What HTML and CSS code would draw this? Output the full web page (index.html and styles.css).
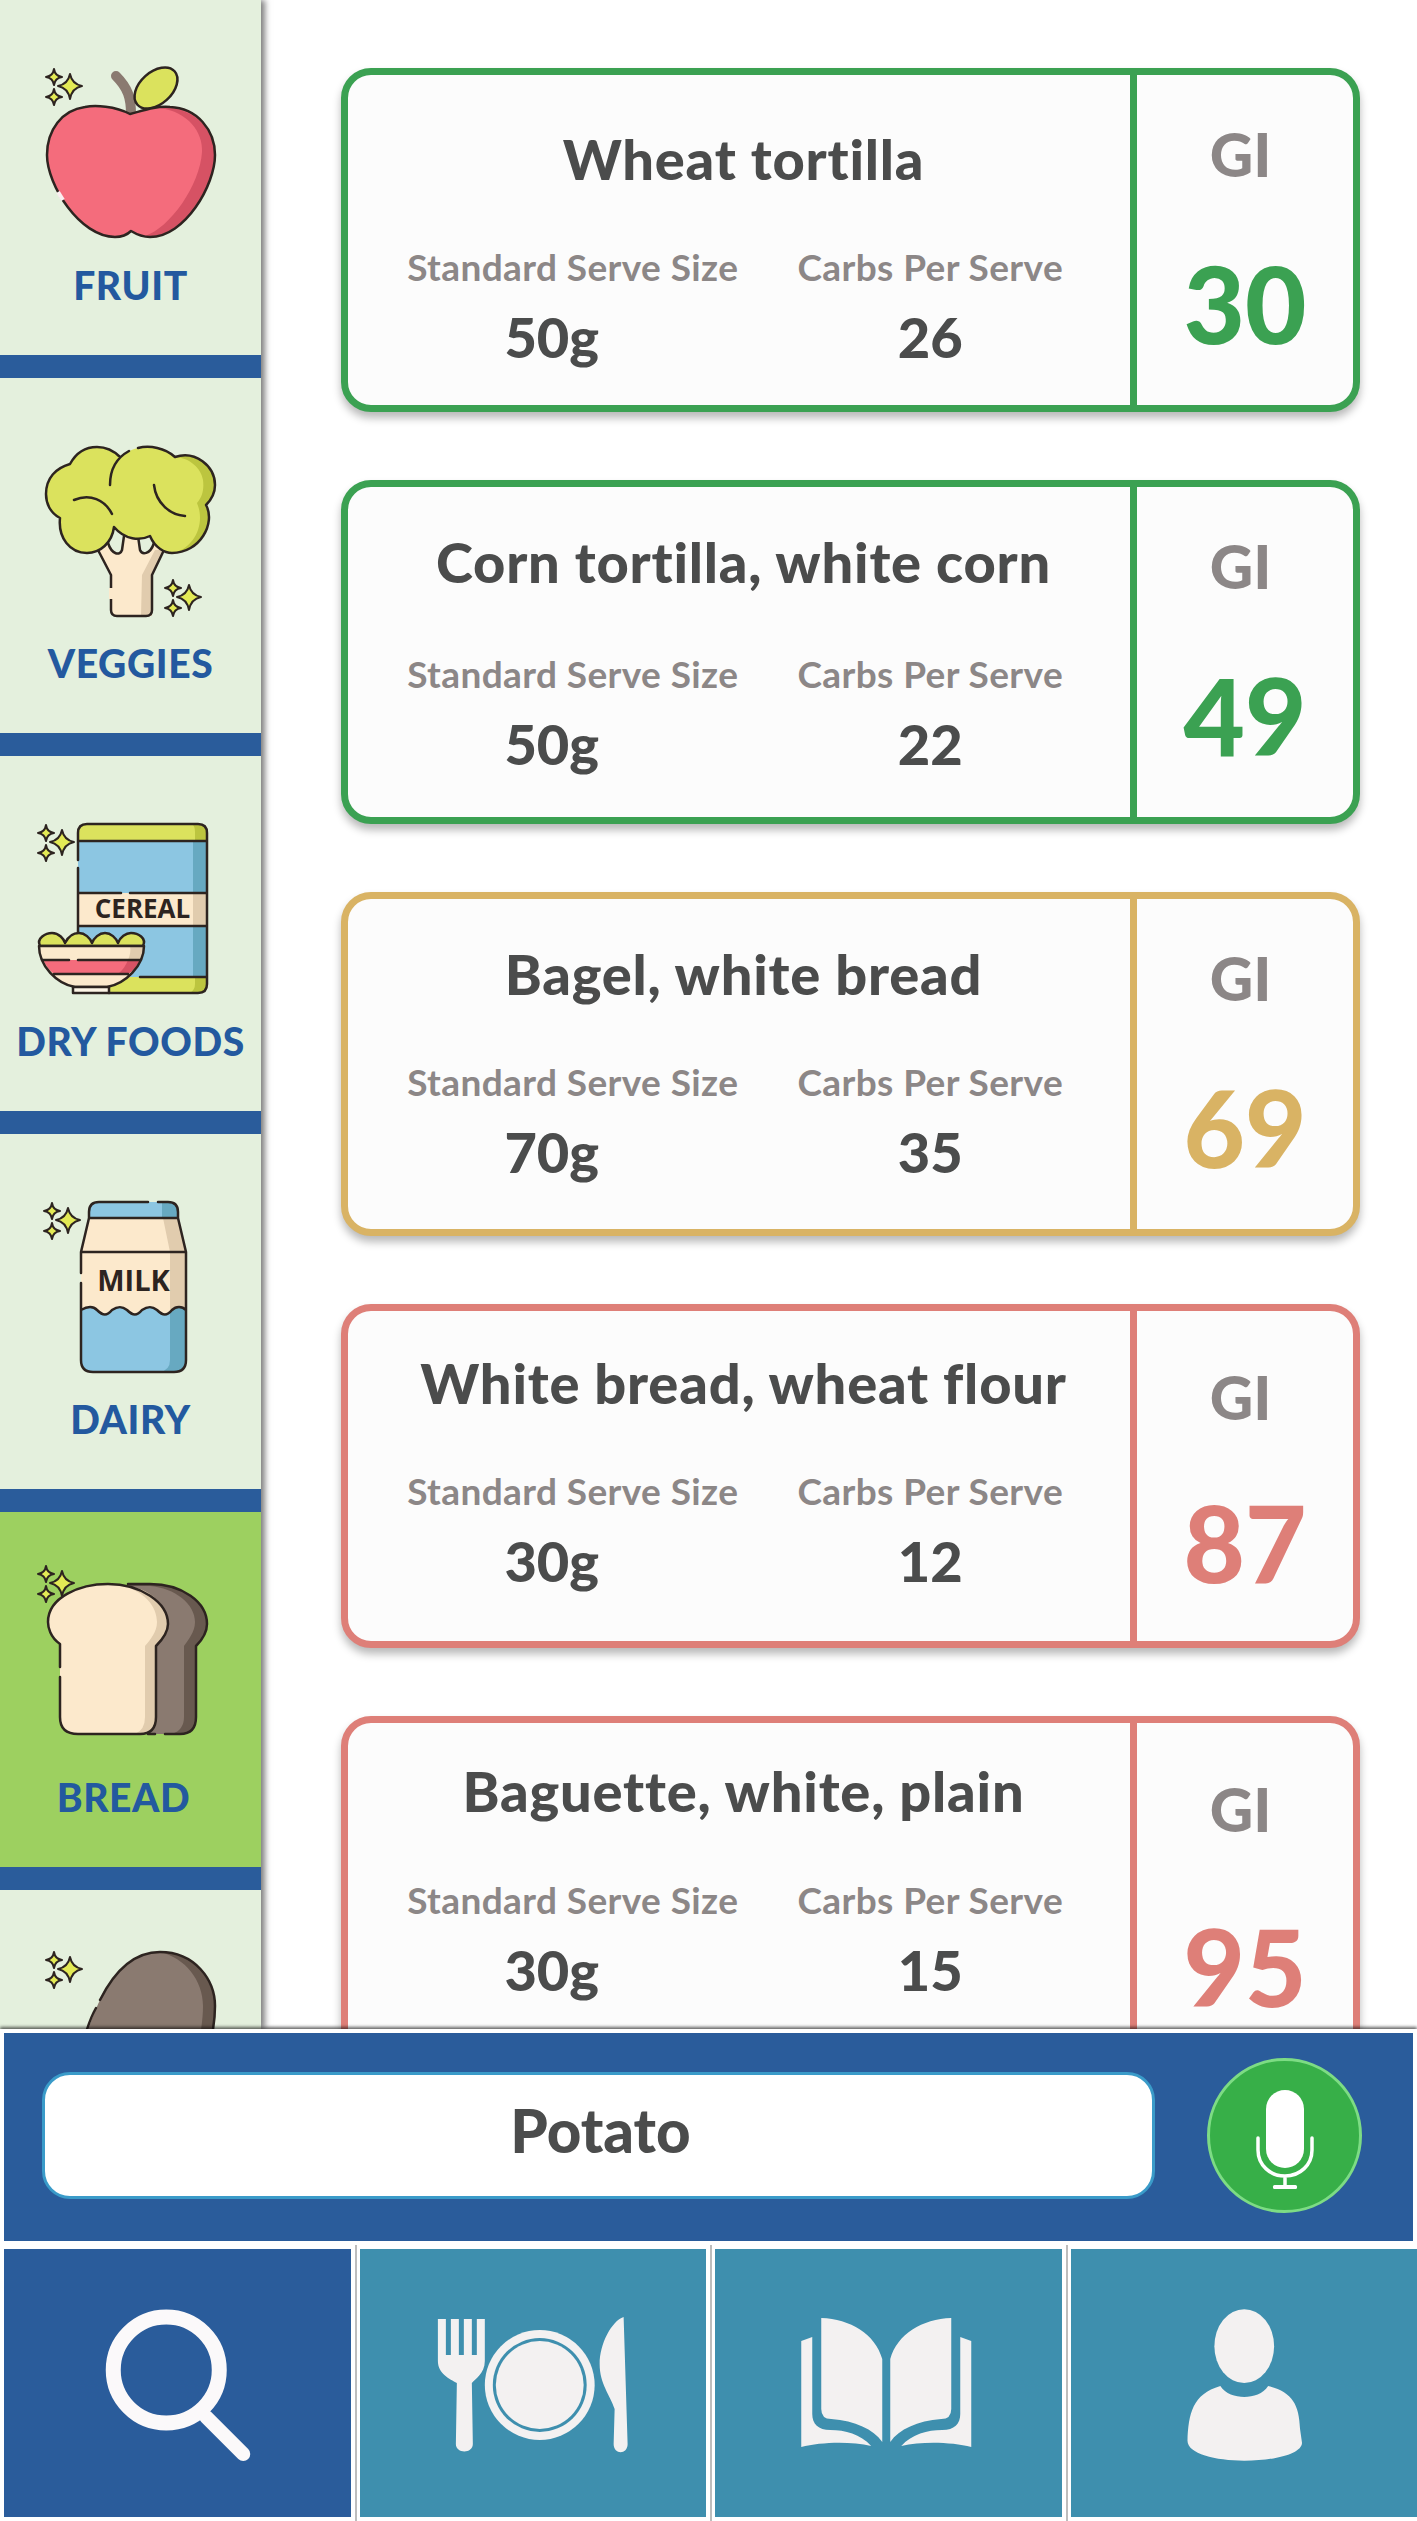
FILE: index.html
```html
<!DOCTYPE html>
<html lang="en">
<head>
    <meta charset="utf-8">
    <meta name="viewport" content="width=device-width, initial-scale=1.0">
    <title>GI Food Search</title>
    <link rel="stylesheet" href="styles.css">
</head>
<body>

    <svg class="defs" width="0" height="0">
        <defs>
            <g id="sparkle" class="star">
                <path d="M24,6 Q26,16 36,18 Q26,20 24,31 Q22,20 12,18 Q22,16 24,6Z"/>
                <path d="M8,1 Q9,8 16,9 Q9,10 8,17 Q7,10 0,9 Q7,8 8,1Z"/>
                <path d="M8,21 Q9,28 16,29 Q9,30 8,37 Q7,30 0,29 Q7,28 8,21Z"/>
            </g>
        </defs>
    </svg>

    <main class="browse">
        <nav class="sidebar">
            <a class="cat" href="#">
                <svg class="cat-icon" viewBox="0 0 261 250">
                    <use href="#sparkle" x="46" y="68"/>
                    <path class="line" fill="none" stroke-width="15" stroke-linecap="round" d="M116,76 C128,88 131,98 131,114"/>
                    <path fill="none" stroke="#8a7a70" stroke-width="10" stroke-linecap="round" d="M116,76 C128,88 131,98 131,114"/>
                    <ellipse class="line" fill="#dbe25d" cx="156" cy="88" rx="25" ry="16" transform="rotate(-42 156 88)"/>
                    <path fill="#f46c7c" d="M130,114 C115,106 95,105 85,107 C62,110 47,130 47,155 C47,185 80,237 115,237 C122,237 128,234 131,231 C136,234 142,237 150,237 C185,237 215,185 215,155 C215,130 197,108 170,107 C155,106 145,110 130,114Z"/>
                    <path fill="#d65264" d="M160,108 C188,112 203,132 202,152 C200,185 170,228 145,236 C185,240 215,185 215,155 C215,130 195,106 160,108Z"/>
                    <path class="line" fill="none" d="M130,114 C115,106 95,105 85,107 C62,110 47,130 47,155 C47,185 80,237 115,237 C122,237 128,234 131,231 C136,234 142,237 150,237 C185,237 215,185 215,155 C215,130 197,108 170,107 C155,106 145,110 130,114Z"/>
                    <path fill="none" stroke="#fbeef0" stroke-width="4" d="M58,192 L63,200"/>
                </svg>
                <span class="cat-name">FRUIT</span>
            </a>
            <a class="cat" href="#">
                <svg class="cat-icon" viewBox="0 0 261 250">
                    <use href="#sparkle" x="165" y="201"/>
                    <path fill="#fce9cc" d="M98,172 L111,197 V232 Q111,238 117,238 H146 Q152,238 152,232 V197 L164,172 L154,165 C150,177 142,177 140,172 L138,158 H124 L122,172 C120,178 112,177 108,165Z"/>
                    <path fill="#e1ccae" d="M142,197 L155,172 H164 L152,197 V238 H141Z"/>
                    <path class="line" fill="none" d="M98,172 L111,197 V232 Q111,238 117,238 H146 Q152,238 152,232 V197 L164,172 M154,165 C150,177 142,177 140,172 L138,158 M124,158 L122,172 C120,178 112,177 108,165"/>
                    <path fill="none" stroke="#fce9cc" stroke-width="4" d="M111,210 V221"/>
                    <path fill="#dbe25d" d="M70,86 C76,75 86,69 97,69 C106,69 114,73 120,79 C130,70 148,66 160,70 C166,72 171,75 175,79 C195,72 215,88 215,107 C215,116 211,122 206,127 C216,145 200,175 172,175 C165,175 155,170 150,158 C140,163 125,162 114,149 C112,165 100,175 87,175 C70,175 58,160 60,140 C50,135 46,125 46,116 C46,100 56,90 70,86Z"/>
                    <path fill="#bcc53f" d="M175,79 C195,72 215,88 215,107 C215,116 211,122 206,127 C216,145 200,175 172,175 C190,172 200,155 200,140 C200,132 198,128 197,125 C203,118 204,110 203,102 C201,90 190,80 175,79Z"/>
                    <path class="line" fill="none" d="M120,79 C114,73 106,69 97,69 C86,69 76,75 70,86 C56,90 46,100 46,116 C46,125 50,135 60,140 C58,160 70,175 87,175 C100,175 112,165 114,149 C125,162 140,163 150,158 C155,170 165,175 172,175 C200,175 216,145 206,127 C211,122 215,116 215,107 C215,88 195,72 175,79 C165,70 150,67 138,70 M110,107 C110,90 118,79 129,73 M154,107 C156,125 170,137 185,138 M74,122 C90,115 105,122 112,136"/>
                </svg>
                <span class="cat-name">VEGGIES</span>
            </a>
            <a class="cat" href="#">
                <svg class="cat-icon" viewBox="0 0 261 250">
                    <use href="#sparkle" x="38" y="68"/>
                    <rect fill="#8cc6e2" x="78" y="70" width="129" height="166" rx="9"/>
                    <rect fill="#67a9c1" x="193" y="85" width="14" height="136"/>
                    <path fill="#dbe25d" d="M78,85 V77 Q78,68 87,68 H198 Q207,68 207,77 V85Z M78,221 H207 V228 Q207,237 198,237 H78Z"/>
                    <path fill="#bcc53f" d="M192,68 H198 Q207,68 207,77 V85 H195 V76 Q195,70 192,68Z M195,221 H207 V228 Q207,237 198,237 H190 Q195,234 195,228Z"/>
                    <rect fill="#fce9cc" x="78" y="137" width="129" height="33"/>
                    <rect fill="#e1ccae" x="193" y="137" width="14" height="33"/>
                    <path class="line" fill="none" d="M78,104 V77 Q78,68 87,68 H198 Q207,68 207,77 V228 Q207,237 198,237 H109 M78,112 V178 M78,85 H207 M78,137 H121 M130,137 H207 M78,170 H207 M140,221 H207"/>
                    <text class="pack-text cereal" x="142.5" y="162" text-anchor="middle">CEREAL</text>
                    <path class="line" fill="#dbe25d" d="M40,190 C36,182 46,177 52,177 C59,177 64,183 65,187 C68,181 73,177 79,177 C85,177 90,182 92,187 C94,182 99,177 105,177 C111,177 116,182 118,187 C120,181 126,177 131,177 C138,177 147,182 143,190Z"/>
                    <path fill="#fce9cc" d="M39,190 H144 C144,210 125,228 107,231 H75 C57,228 39,210 39,190Z"/>
                    <path fill="#f46c7c" d="M43,204 H140 C137,210 133,215 128,218 H54 C50,215 46,210 43,204Z"/>
                    <path fill="#e1ccae" d="M130,190 H144 C144,198 142,204 140,204 H128 C130,199 131,195 130,190Z"/>
                    <path fill="#d65264" d="M128,204 H140 C137,210 133,215 128,218 H118 C123,214 126,209 128,204Z"/>
                    <path class="line" fill="none" d="M39,190 H144 C144,210 125,228 107,231 H75 C57,228 39,210 39,190Z M43,204 H69 M78,204 H140 M54,218 H128"/>
                    <rect class="line" fill="#fdf5e6" x="73" y="231" width="36" height="6"/>
                </svg>
                <span class="cat-name">DRY FOODS</span>
            </a>
            <a class="cat" href="#">
                <svg class="cat-icon" viewBox="0 0 261 250">
                    <use href="#sparkle" x="44" y="68"/>
                    <path fill="#8cc6e2" d="M89,84 V78 Q89,68 99,68 H168 Q178,68 178,78 V84Z"/>
                    <path fill="#67a9c1" d="M162,68 H168 Q178,68 178,78 V84 H162Z"/>
                    <path fill="#fce9cc" d="M89,84 H178 L186,118 V180 H81 V118Z"/>
                    <path fill="#e1ccae" d="M163,84 H178 L186,118 V180 H170 V118 L170,118Z"/>
                    <path fill="#8cc6e2" d="M81,176 C88,172 93,172 97,176 C103,182 107,182 112,176 C118,172 122,172 127,176 C133,182 137,182 142,176 C148,172 152,172 157,176 C163,182 167,182 172,176 C176,172 182,172 186,176 V226 Q186,238 174,238 H93 Q81,238 81,226Z"/>
                    <path fill="#67a9c1" d="M170,178 C176,172 182,172 186,176 V226 Q186,238 174,238 H160 Q170,236 170,226Z"/>
                    <path class="line" fill="none" d="M148,68 H99 Q89,68 89,78 V84 M158,68 H168 Q178,68 178,78 V84 M89,84 H178 M89,84 L81,118 V139 M178,84 L186,118 V226 Q186,238 174,238 H93 Q81,238 81,226 V149 M81,118 H186 M81,176 C88,172 93,172 97,176 C103,182 107,182 112,176 C118,172 122,172 127,176 C133,182 137,182 142,176 C148,172 152,172 157,176 C163,182 167,182 172,176 C176,172 182,172 186,176"/>
                    <text class="pack-text milk" x="133.5" y="157" text-anchor="middle">MILK</text>
                </svg>
                <span class="cat-name">DAIRY</span>
            </a>
            <a class="cat active" href="#">
                <svg class="cat-icon" viewBox="0 0 261 250">
                    <use href="#sparkle" x="38" y="53"/>
                    <path fill="#68594f" d="M128,72 H150 C182,72 207,90 207,112 C207,120 202,128 196,134 V205 Q196,222 180,222 H140Z"/>
                    <path fill="#8a7a70" d="M128,74 H150 C175,76 195,92 195,110 C195,120 188,128 184,134 V205 Q184,218 172,222 H140Z"/>
                    <path class="line" fill="none" d="M128,72 H150 C182,72 207,90 207,112 C207,120 202,128 196,134 V205 Q196,222 180,222 H165 M155,222 H148"/>
                    <path fill="#fce9cc" d="M60,132 C50,125 48,115 48,110 C48,85 80,72 108,72 C140,72 168,90 168,112 C168,120 162,128 156,134 V205 Q156,222 140,222 H78 Q60,222 60,205Z"/>
                    <path fill="#e1ccae" d="M118,73 C145,78 157,95 157,110 C157,120 150,128 145,134 V205 Q145,218 135,222 H140 Q156,222 156,205 V134 C162,128 168,120 168,112 C168,90 145,73 118,73Z"/>
                    <path class="line" fill="none" d="M60,155 V132 C50,125 48,115 48,110 C48,85 80,72 108,72 C140,72 168,90 168,112 C168,120 162,128 156,134 V205 Q156,222 140,222 H78 Q60,222 60,205 V165"/>
                </svg>
                <span class="cat-name cat-name-bread">BREAD</span>
            </a>
            <a class="cat" href="#">
                <svg class="cat-icon" viewBox="0 0 261 250">
                    <use href="#sparkle" x="46" y="61"/>
                    <path fill="#8a7a70" d="M80,170 C95,100 125,62 160,62 C195,62 215,90 215,116 C215,135 212,150 205,170Z"/>
                    <path fill="#68594f" d="M160,62 C195,62 215,90 215,116 C215,135 212,150 205,170 H195 C200,150 203,130 203,116 C203,90 185,68 160,62Z"/>
                    <path class="line" fill="none" d="M80,170 C85,140 92,125 96,118 M100,110 C115,80 135,62 160,62 C195,62 215,90 215,116 C215,135 212,150 205,170"/>
                </svg>
            </a>
        </nav>

        <section class="foods">
            <article class="card good card-1">
                <div class="card-main">
                    <h2 class="food-name">Wheat tortilla</h2>
                    <div class="facts">
                        <div class="fact"><span class="fact-label">Standard Serve Size</span><span class="fact-value serve">50g</span></div>
                        <div class="fact"><span class="fact-label">Carbs Per Serve</span><span class="fact-value">26</span></div>
                    </div>
                </div>
                <div class="card-gi"><span class="gi-label">GI</span><span class="gi-value">30</span></div>
            </article>

            <article class="card good card-2">
                <div class="card-main">
                    <h2 class="food-name">Corn tortilla, white corn</h2>
                    <div class="facts">
                        <div class="fact"><span class="fact-label">Standard Serve Size</span><span class="fact-value serve">50g</span></div>
                        <div class="fact"><span class="fact-label">Carbs Per Serve</span><span class="fact-value">22</span></div>
                    </div>
                </div>
                <div class="card-gi"><span class="gi-label">GI</span><span class="gi-value">49</span></div>
            </article>

            <article class="card medium card-3">
                <div class="card-main">
                    <h2 class="food-name">Bagel, white bread</h2>
                    <div class="facts">
                        <div class="fact"><span class="fact-label">Standard Serve Size</span><span class="fact-value serve">70g</span></div>
                        <div class="fact"><span class="fact-label">Carbs Per Serve</span><span class="fact-value">35</span></div>
                    </div>
                </div>
                <div class="card-gi"><span class="gi-label">GI</span><span class="gi-value">69</span></div>
            </article>

            <article class="card high card-4">
                <div class="card-main">
                    <h2 class="food-name">White bread, wheat flour</h2>
                    <div class="facts">
                        <div class="fact"><span class="fact-label">Standard Serve Size</span><span class="fact-value serve">30g</span></div>
                        <div class="fact"><span class="fact-label">Carbs Per Serve</span><span class="fact-value">12</span></div>
                    </div>
                </div>
                <div class="card-gi"><span class="gi-label">GI</span><span class="gi-value">87</span></div>
            </article>

            <article class="card high card-5">
                <div class="card-main">
                    <h2 class="food-name">Baguette, white, plain</h2>
                    <div class="facts">
                        <div class="fact"><span class="fact-label">Standard Serve Size</span><span class="fact-value serve">30g</span></div>
                        <div class="fact"><span class="fact-label">Carbs Per Serve</span><span class="fact-value">15</span></div>
                    </div>
                </div>
                <div class="card-gi"><span class="gi-label">GI</span><span class="gi-value">95</span></div>
            </article>
        </section>
    </main>

    <footer class="footer">
        <div class="search">
            <div class="search-box">Potato</div>
            <button class="mic" type="button" aria-label="Voice search">
                <svg viewBox="0 0 155 155" width="155" height="155">
                    <rect x="59" y="32" width="38" height="78" rx="19" fill="#fff"/>
                    <path d="M51,80 V92 C51,107 63,118 78,118 C93,118 105,107 105,92 V80 M78,118 V129" fill="none" stroke="#fff" stroke-width="3.5" stroke-linecap="round"/>
                    <rect x="66" y="127" width="24" height="4" rx="1.5" fill="#fff"/>
                </svg>
            </button>
        </div>
        <div class="tabs">
            <a class="tab active" href="#">
                <svg viewBox="0 0 346 268">
                    <circle cx="162" cy="121" r="53" fill="none" stroke="#fbf9fa" stroke-width="15"/>
                    <path d="M202,168 L239,205" fill="none" stroke="#fbf9fa" stroke-width="14" stroke-linecap="round"/>
                </svg>
            </a>
            <span class="tab-sep"></span>
            <a class="tab" href="#">
                <svg viewBox="0 0 347 268">
                    <path class="glyph" d="M78,70 H86 V106 H91 V70 H99 V106 H104 V70 H112 V106 H117 V70 H125 V112 C125,125 115,130 112,134 L113,195 C113,205 96,205 96,195 L97,134 C90,130 78,125 78,112Z"/>
                    <circle class="glyph" cx="180" cy="136" r="55"/>
                    <circle cx="180" cy="136" r="47" fill="#3e8fae"/>
                    <circle class="glyph" cx="180" cy="136" r="44"/>
                    <path class="glyph" d="M264,68 C252,72 240,95 240,115 C240,135 250,145 255,160 L254,195 C254,206 268,206 268,195Z"/>
                </svg>
            </a>
            <span class="tab-sep"></span>
            <a class="tab" href="#">
                <svg viewBox="0 0 346 268">
                    <g id="book-half">
                        <path class="glyph" d="M106,69 C135,70 160,85 167,110 V193 C158,180 140,172 116,170 Q106,170 106,160Z"/>
                        <path class="glyph" d="M97,88 L86,92 V198 C105,193 135,192 156,197 C145,185 130,181 115,181 C103,181 97,175 97,165Z"/>
                    </g>
                    <use href="#book-half" transform="matrix(-1 0 0 1 342 0)"/>
                </svg>
            </a>
            <span class="tab-sep"></span>
            <a class="tab" href="#">
                <svg viewBox="0 0 348 268">
                    <ellipse class="glyph" cx="174" cy="97" rx="30" ry="37"/>
                    <path class="glyph" d="M150,137 C155,145 165,148 174,148 C183,148 193,145 198,137 C222,143 229,155 230,180 L232,194 C232,205 205,212 174,212 C145,212 117,205 117,192 C118,165 122,145 150,137Z"/>
                </svg>
            </a>
        </div>
    </footer>

</body>
</html>
```
FILE: styles.css
```css
* {
    box-sizing: border-box;
}
body {
    margin: 0;
    height: 2521px;
    overflow: hidden;
    background: #fff;
    font-family: Lato, "Open Sans", sans-serif;
    font-variant-ligatures: none;
}
a {
    text-decoration: none;
}
.defs {
    display: block;
    height: 0;
}
.star path {
    fill: #e3ea55;
    stroke: #2d2420;
    stroke-width: 2;
    stroke-linejoin: round;
}
.line {
    stroke: #2d2420;
    stroke-width: 2.5;
    stroke-linejoin: round;
    stroke-linecap: round;
}
.glyph {
    fill: #f3f1f1;
}

/* top part: categories + results */
.browse {
    display: flex;
    height: 2029px;
    overflow: hidden;
}
.sidebar {
    flex: 0 0 261px;
    height: 2029px;
    overflow: hidden;
    box-shadow: 4px 0 6px rgba(0, 0, 0, 0.5);
    position: relative;
    z-index: 1;
    background: #e4f0dd;
}
.cat {
    display: block;
    height: 378px;
    border-bottom: 23px solid #2a5c9b;
    background: #e4f0dd;
}
.cat.active {
    background: #9dd060;
}
.cat-icon {
    display: block;
    width: 261px;
    height: 250px;
}
.cat-name {
    display: block;
    margin-top: 15px;
    line-height: 40px;
    text-align: center;
    white-space: nowrap;
    font-size: 39px;
    font-weight: 900;
    letter-spacing: 0.6px;
    color: #23599f;
}
.cat-name-bread {
    padding-right: 14px;
}
.pack-text {
    font-family: "Open Sans", sans-serif;
    font-weight: 700;
    fill: #2d2420;
}
.cereal {
    font-size: 26px;
}
.milk {
    font-size: 29px;
}

.foods {
    flex: 1;
    display: flex;
    flex-direction: column;
    gap: 68px;
    padding: 68px 57px 0 80px;
}
.card {
    flex: 0 0 344px;
    display: flex;
    border: 7px solid;
    border-radius: 30px;
    background: #fcfcfc;
    box-shadow: 0 6px 8px rgba(0, 0, 0, 0.28);
}
.card.good {
    border-color: #3ba152;
    --gi-color: #3ba152;
}
.card.medium {
    border-color: #d9b364;
    --gi-color: #d9b364;
}
.card.high {
    border-color: #de7f78;
    --gi-color: #de7f78;
}
.card-1 { --name-top: 54px; --facts-gap: 58px; --gi-top: 49px; --gi-gap: 64px; }
.card-2 { --name-top: 45px; --facts-gap: 62px; --gi-top: 49px; --gi-gap: 64px; }
.card-3 { --name-top: 45px; --facts-gap: 58px; --gi-top: 49px; --gi-gap: 64px; }
.card-4 { --name-top: 42px; --facts-gap: 58px; --gi-top: 56px; --gi-gap: 60px; }
.card-5 { --name-top: 38px; --facts-gap: 59px; --gi-top: 56px; --gi-gap: 72px; }

.card-main {
    flex: 0 0 782px;
    padding: var(--name-top) 21px 0 46px;
}
.food-name {
    margin: 0 0 0 -16px;
    line-height: 60px;
    text-align: center;
    font-size: 56px;
    font-weight: 900;
    letter-spacing: 0.8px;
    color: #4b4c4c;
    white-space: nowrap;
}
.facts {
    display: grid;
    grid-template-columns: 1fr 1fr;
    margin-top: var(--facts-gap);
}
.fact {
    text-align: center;
}
.fact-label {
    display: block;
    line-height: 40px;
    font-size: 37px;
    font-weight: 700;
    letter-spacing: 0.4px;
    color: #8c8787;
    white-space: nowrap;
}
.fact-value {
    display: block;
    margin-top: 22px;
    line-height: 56px;
    font-size: 56px;
    font-weight: 900;
    color: #4b4c4c;
}
.fact-value.serve {
    padding-right: 42px;
}
.card-gi {
    flex: 1;
    padding-top: var(--gi-top);
    border-left: 7px solid var(--gi-color);
    text-align: center;
}
.gi-label {
    display: block;
    padding-right: 9px;
    line-height: 60px;
    font-size: 60px;
    font-weight: 900;
    color: #8c8787;
}
.gi-value {
    display: block;
    margin-top: var(--gi-gap);
    line-height: 110px;
    font-size: 106px;
    font-weight: 900;
    color: var(--gi-color);
}

/* search + tabs */
.footer {
    position: relative;
    z-index: 2;
    height: 492px;
    padding: 4px 0 4px 4px;
    background: #fff;
    box-shadow: 0 -2px 3px rgba(0, 0, 0, 0.6);
}
.search {
    display: flex;
    align-items: center;
    gap: 52px;
    width: 1409px;
    height: 208px;
    padding: 0 51px 3px 38px;
    background: #2a5c9b;
}
.search-box {
    flex: 1;
    height: 127px;
    border: 3px solid #3a9bc9;
    border-radius: 28px;
    background: #fff;
    text-align: center;
    line-height: 111px;
    padding-left: 4px;
    font-size: 60px;
    font-weight: 900;
    color: #4b4c4c;
}
.mic {
    flex: 0 0 155px;
    width: 155px;
    height: 155px;
    padding: 0;
    border: 3px solid #7ddc84;
    border-radius: 50%;
    background: #37af48;
    overflow: hidden;
}
.mic svg {
    display: block;
    margin: -3px;
}
.tabs {
    display: flex;
    height: 268px;
    margin-top: 8px;
}
.tab {
    flex: 1;
    display: block;
    background: #3e8fae;
}
.tab.active {
    background: #2a5c9b;
}
.tab svg {
    display: block;
    width: 100%;
    height: 100%;
}
.tab-sep {
    flex: 0 0 2px;
    margin: -4px 3px -4px 4px;
    background: #bdbdbd;
}
```
